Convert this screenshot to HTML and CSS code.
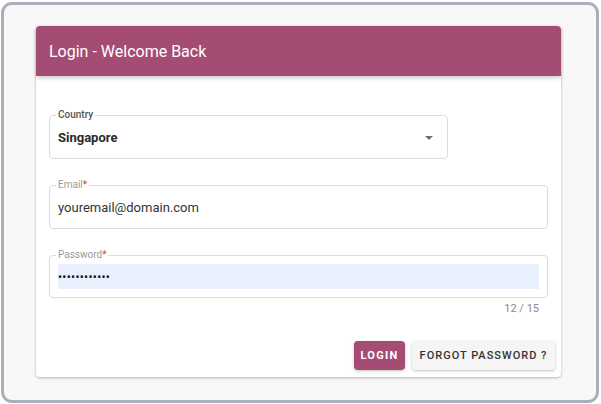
FILE: index.html
```html
<!DOCTYPE html>
<html>
<head>
<meta charset="utf-8">
<link rel="stylesheet" href="styles.css">
</head>
<body>
<div class="frame">
  <div class="card">
    <div class="card-header">Login - Welcome Back</div>
    <div class="card-body">
      <div class="field field-select">
        <span class="label label-dark">Country</span>
        <span class="value value-bold">Singapore</span>
        <span class="arrow"></span>
      </div>
      <div class="field field-full">
        <span class="label">Email<span class="req">*</span></span>
        <span class="value">youremail@domain.com</span>
      </div>
      <div class="field field-full field-pw">
        <span class="label">Password<span class="req">*</span></span>
        <span class="autofill"><span class="dots">••••••••••••</span></span>
      </div>
      <div class="counter">12 / 15</div>
      <div class="actions">
        <button class="btn btn-primary">LOGIN</button>
        <button class="btn btn-plain">FORGOT PASSWORD ?</button>
      </div>
    </div>
  </div>
</div>
</body>
</html>
```
FILE: styles.css
```css
html, body {
  margin: 0;
  padding: 0;
  background: #ffffff;
  font-family: Roboto, "Liberation Sans", sans-serif;
}
.frame {
  box-sizing: border-box;
  width: 598px;
  height: 401px;
  margin: 2px 0 0 1px;
  border: 3px solid #aab0ba;
  border-radius: 11px;
  background: #f8f8f9;
  padding: 21px 0 0 32px;
}
.card {
  width: 525px;
  height: 351px;
  background: #ffffff;
  border-radius: 4px;
  box-shadow: 0 1px 3px rgba(0,0,0,0.28);
  display: flex;
  flex-direction: column;
}
.card-header {
  height: 50px;
  background: #a54c75;
  border-radius: 4px 4px 0 0;
  color: #ffffff;
  font-size: 16px;
  padding-left: 13px;
  display: flex;
  align-items: center;
  box-shadow: 0 2px 4px rgba(0,0,0,0.2);
  position: relative;
  z-index: 1;
}
.card-body {
  padding: 39px 13px 0 13px;
  display: flex;
  flex-direction: column;
  flex: 1;
}
.field {
  position: relative;
  box-sizing: border-box;
  height: 44px;
  border: 1px solid #dcdcdc;
  border-radius: 4px;
  padding: 0 8px;
  display: flex;
  align-items: center;
  margin-bottom: 26px;
}
.field-select {
  width: 399px;
}
.field-full {
  width: 499px;
}
.field-pw {
  height: 43px;
  margin-bottom: 0;
}
.label {
  position: absolute;
  top: -7px;
  left: 6px;
  padding: 0 2px;
  background: #ffffff;
  font-size: 10px;
  line-height: 12px;
  color: #9a9a9a;
}
.label-dark {
  color: #555555;
  font-weight: 500;
}
.req {
  color: #e53935;
}
.value {
  font-size: 13px;
  color: #333333;
}
.value-bold {
  font-weight: 700;
  color: #2a2a2a;
}
.arrow {
  position: absolute;
  right: 14px;
  top: 20px;
  width: 0;
  height: 0;
  border-left: 4px solid transparent;
  border-right: 4px solid transparent;
  border-top: 4px solid #707070;
}
.autofill {
  flex: 1;
  height: 25px;
  background: #e8f0fe;
  display: flex;
  align-items: center;
}
.dots {
  font-size: 12px;
  color: #111;
  letter-spacing: 0.3px;
}
.counter {
  width: 490px;
  text-align: right;
  font-size: 11px;
  line-height: 12px;
  color: #8a8a8a;
  margin-top: 5px;
}
.actions {
  display: flex;
  justify-content: flex-end;
  gap: 7px;
  margin-top: 26px;
  margin-right: -7px;
}
.btn {
  font-family: Roboto, "Liberation Sans", sans-serif;
  height: 29px;
  border: none;
  border-radius: 4px;
  font-size: 11px;
  letter-spacing: 1px;
  padding: 0;
  white-space: nowrap;
  box-shadow: 0 1px 3px rgba(0,0,0,0.25);
}
.btn-primary {
  width: 51px;
  background: #a54c75;
  color: #ffffff;
  font-weight: 700;
  letter-spacing: 1.3px;
}
.btn-plain {
  width: 143px;
  background: #f5f5f5;
  color: #333333;
  font-weight: 500;
}
```
